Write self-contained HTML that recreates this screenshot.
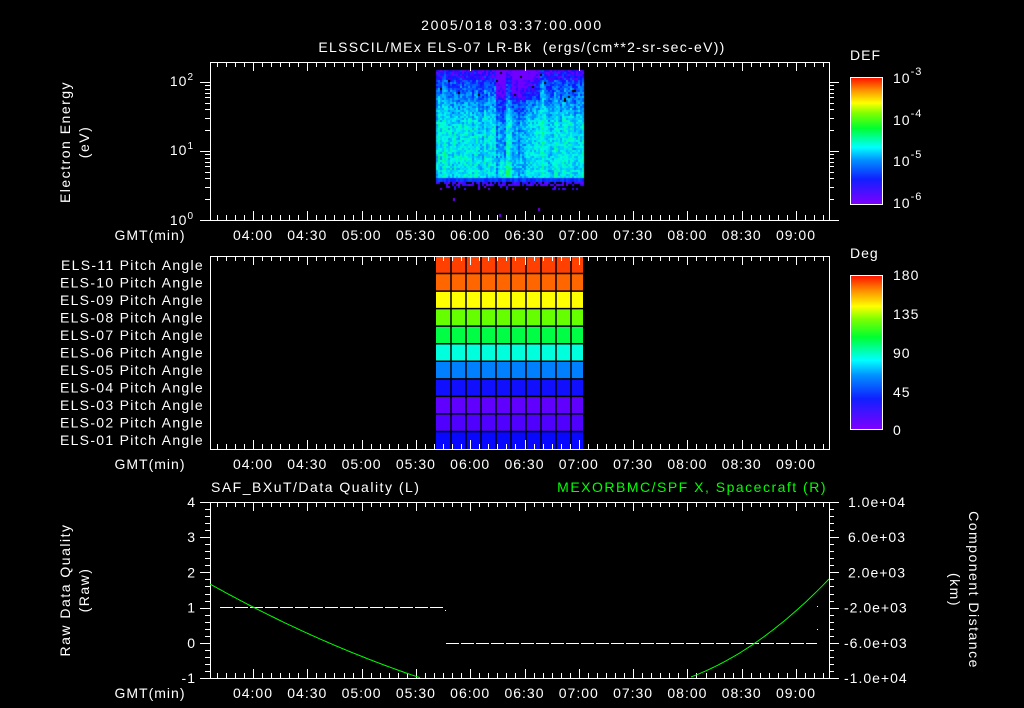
<!DOCTYPE html>
<html><head><meta charset="utf-8"><style>
html,body{margin:0;padding:0;background:#000;width:1024px;height:708px;overflow:hidden}
svg{position:absolute;left:0;top:0}
canvas{position:absolute;left:0;top:0}
text{font-family:"Liberation Sans",sans-serif;fill:#fff;font-size:14px;letter-spacing:1px}
</style></head><body>
<canvas id="c" width="1024" height="708"></canvas>
<svg id="s" width="1024" height="708" xmlns="http://www.w3.org/2000/svg">
<defs>
<linearGradient id="cb" x1="0" y1="1" x2="0" y2="0">
<stop offset="0" stop-color="#8000ff"/><stop offset="0.2" stop-color="#1020ff"/><stop offset="0.35" stop-color="#0090ff"/><stop offset="0.45" stop-color="#00ffff"/><stop offset="0.6" stop-color="#00ff30"/><stop offset="0.72" stop-color="#80ff00"/><stop offset="0.8" stop-color="#ffff00"/><stop offset="0.9" stop-color="#ff9000"/><stop offset="1" stop-color="#ff1000"/>
</linearGradient>
</defs>
<text x="512" y="30" text-anchor="middle" font-size="16" style="letter-spacing:1.8px">2005/018 03:37:00.000</text>
<text x="522" y="52" text-anchor="middle" font-size="16" style="letter-spacing:1.3px" xml:space="preserve">ELSSCIL/MEx ELS-07 LR-Bk  (ergs/(cm**2-sr-sec-eV))</text>
<text transform="translate(70,142) rotate(-90)" text-anchor="middle" font-size="15" style="letter-spacing:1.5px">Electron Energy</text>
<text transform="translate(89,142) rotate(-90)" text-anchor="middle" font-size="15" style="letter-spacing:1.5px">(eV)</text>
<text x="194" y="86" text-anchor="end">10<tspan dy="-6" font-size="10">2</tspan></text>
<text x="194" y="155" text-anchor="end">10<tspan dy="-6" font-size="10">1</tspan></text>
<text x="194" y="225" text-anchor="end">10<tspan dy="-6" font-size="10">0</tspan></text>
<text x="850" y="60" font-size="16">DEF</text>
<rect x="850.5" y="77.5" width="32" height="127" fill="url(#cb)" stroke="#fff"/>
<text x="893" y="83" font-size="16">10<tspan dy="-8" font-size="11">-3</tspan></text>
<text x="893" y="125" font-size="16">10<tspan dy="-8" font-size="11">-4</tspan></text>
<text x="893" y="166" font-size="16">10<tspan dy="-8" font-size="11">-5</tspan></text>
<text x="893" y="208" font-size="16">10<tspan dy="-8" font-size="11">-6</tspan></text>
<text x="850" y="258" font-size="16">Deg</text>
<rect x="850.5" y="275.5" width="32" height="154" fill="url(#cb)" stroke="#fff"/>
<text x="893" y="280" font-size="16">180</text>
<text x="893" y="319" font-size="16">135</text>
<text x="893" y="358" font-size="16">90</text>
<text x="893" y="397" font-size="16">45</text>
<text x="893" y="435" font-size="16">0</text>
<text x="211" y="492" font-size="15" style="letter-spacing:1.5px">SAF_BXuT/Data Quality (L)</text>
<text x="827" y="492" text-anchor="end" font-size="15" style="fill:#00ff00;letter-spacing:1.5px">MEXORBMC/SPF X, Spacecraft (R)</text>
<text transform="translate(70,590) rotate(-90)" text-anchor="middle" font-size="15" style="letter-spacing:1.5px">Raw Data Quality</text>
<text transform="translate(89,590) rotate(-90)" text-anchor="middle" font-size="15" style="letter-spacing:1.5px">(Raw)</text>
<text transform="translate(969,590) rotate(90)" text-anchor="middle" font-size="15" style="letter-spacing:1.5px">Component Distance</text>
<text transform="translate(950,590) rotate(90)" text-anchor="middle" font-size="15" style="letter-spacing:1.5px">(km)</text>
<g id="g"></g>
</svg>
<script>
var g=document.getElementById('g'),ns='http://www.w3.org/2000/svg';
function el(t,a,txt){var e=document.createElementNS(ns,t);for(var k in a)e.setAttribute(k,a[k]);if(txt!=null)e.textContent=txt;g.appendChild(e);return e;}
function ln(x1,y1,x2,y2,c,w){el('line',{x1:x1,y1:y1,x2:x2,y2:y2,stroke:c||'#fff','stroke-width':w||1});}
var L=210,R=829;function tx(t){return 253+(t-60)*1.81;}
var panels=[[62,220],[256,449],[502,678]];
var cols=['#ff4000','#ff6600','#ffff00','#66ff00','#00ff44','#00ffdd','#0080ff','#1010ff','#6000ff','#5000ff','#0808ff'];
var ph=(449-256)/11;
for(var i=0;i<11;i++){var y=256+i*ph;el('rect',{x:436,y:y,width:147,height:ph,fill:cols[i]});
 el('text',{x:204,y:y+ph/2+5,'text-anchor':'end','font-size':'13.5',style:'letter-spacing:1.3px'},'ELS-'+(11-i<10?'0':'')+(11-i)+' Pitch Angle');}
for(var i=1;i<11;i++)ln(436,256+i*ph,583,256+i*ph,'#000',1.5);
for(var j=1;j<10;j++)ln(436+j*15,256,436+j*15,449,'#000',1.5);
var labs=['04:00','04:30','05:00','05:30','06:00','06:30','07:00','07:30','08:00','08:30','09:00'];
panels.forEach(function(p){
 el('rect',{x:L+.5,y:p[0]+.5,width:R-L,height:p[1]-p[0],fill:'none',stroke:'#fff'});
 for(var t=40;t<=375;t+=5){var x=Math.round(tx(t))+.5;var m=(t%30==0)?9:5;ln(x,p[0],x,p[0]+m);ln(x,p[1],x,p[1]-m);}
 el('text',{x:150,y:p[1]+20,'text-anchor':'middle','font-size':'14'},'GMT(min)');
 labs.forEach(function(s,k){el('text',{x:tx(60+30*k),y:p[1]+20,'text-anchor':'middle','font-size':'14'},s);});
});
for(var d=0;d<3;d++)for(var m=1;m<10;m++){var y=220-69*(d+Math.log10(m));if(y<62)continue;var l=(m==1)?10:5;ln(L-l,Math.round(y)+.5,L,Math.round(y)+.5);ln(R,Math.round(y)+.5,R+l,Math.round(y)+.5);}
for(var k=0;k<=25;k++){var y=Math.round(502+k*176/25)+.5;var l=(k%5==0)?10:5;ln(L-l,y,L,y);ln(R,y,R+l,y);}
['4','3','2','1','0','-1'].forEach(function(s,k){el('text',{x:196,y:502+k*35.2+5,'text-anchor':'end','font-size':'14'},s);});
['1.0e+04','6.0e+03','2.0e+03','-2.0e+03','-6.0e+03','-1.0e+04'].forEach(function(s,k){el('text',{x:s[0]=='-'?844:848,y:502+k*35.2+5,'font-size':'14'},s);});
el('line',{x1:220,y1:607.5,x2:445,y2:607.5,stroke:'#fff','stroke-dasharray':'13 2'});
el('line',{x1:446,y1:643.5,x2:817,y2:643.5,stroke:'#fff','stroke-dasharray':'13 2'});
el('rect',{x:445,y:610,width:1,height:1,fill:'#fff'});
el('rect',{x:817,y:606,width:1,height:1,fill:'#fff'});el('rect',{x:817,y:629,width:1,height:1,fill:'#fff'});
// green curves (quadratic fits)
var pts=[];for(var x=210;x<=421;x+=3){var u=x-210;pts.push(x+','+(584+0.558*u-0.000532*u*u).toFixed(1));}
el('polyline',{points:pts.join(' '),fill:'none',stroke:'#00ff00'});
// right: through (691,677),(755,643),(829,579)
var x1=691,y1=677,x2=755,y2=643,x3=829,y3=579;
var A=((y3-y1)/(x3-x1)-(y2-y1)/(x2-x1))/(x3-x2),B=(y2-y1)/(x2-x1)-A*(x2-x1);
pts=[];for(var x=691;x<=829;x+=3){var u=x-691;pts.push(x+','+(677+B*u+A*u*u).toFixed(1));}
el('polyline',{points:pts.join(' '),fill:'none',stroke:'#00ff00'});
// spectrogram
var c=document.getElementById('c').getContext('2d');
var seed=7;function rnd(){seed=(seed*16807)%2147483647;return seed/2147483647;}
var cm=[[0,[112,0,255]],[0.2,[16,16,255]],[0.38,[0,110,255]],[0.55,[0,200,255]],[0.68,[0,255,230]],[0.85,[0,255,120]],[1,[40,255,40]]];
function col(v){v=Math.max(0,Math.min(1,v));for(var i=1;i<cm.length;i++)if(v<=cm[i][0]){var a=cm[i-1],b=cm[i],f=(v-a[0])/(b[0]-a[0]);return 'rgb('+[0,1,2].map(function(q){return Math.round(a[1][q]+(b[1][q]-a[1][q])*f)}).join(',')+')';}}
for(var x=436;x<584;x+=2){var cf=0;
 if(x>=496&&x<=505)cf=-0.3;if(x>=512&&x<=520)cf=-0.25;if(x>=522&&x<=532)cf=-0.12;if(x>=540&&x<=545)cf=0.1;if(x<450)cf+=0.05;
 var colr=(rnd()-0.5)*0.15;
 for(var y=70;y<178;y+=2){var f=(y-70)/108;var v=0.2+0.42*Math.min(1,f*2)+cf*(1-f*0.6)+colr+(rnd()-0.5)*0.28;
  if(y<80)v-=0.1;if(y<100&&x>495&&x<540)v-=0.12;if(y>160&&x>498&&x<512)v+=0.15;
  if(rnd()<0.01&&y<110)c.fillStyle='#000';else c.fillStyle=col(v);c.fillRect(x,y,2,2);}
 c.fillStyle=col(0.22+rnd()*0.1);c.fillRect(x,178,2,4);
 for(var y=182;y<190;y+=2){if(rnd()<(y<186?0.7:0.15)){c.fillStyle=col(rnd()*0.15);c.fillRect(x,y,2,2);}}
}
c.fillStyle='#7000ff';c.fillRect(453,198,2,3);c.fillRect(538,208,2,3);c.fillRect(499,214,2,3);
</script>
</body></html>
